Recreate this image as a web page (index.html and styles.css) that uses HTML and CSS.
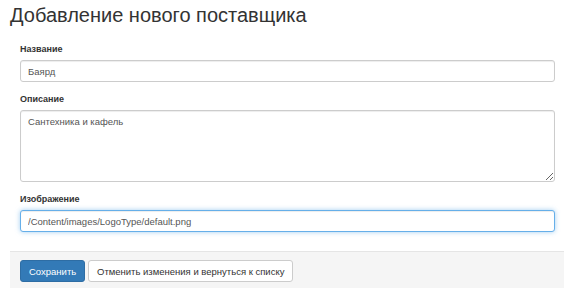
FILE: index.html
```html
<!DOCTYPE html>
<html lang="ru">
<head>
    <meta charset="UTF-8">
    <title>Добавление нового поставщика</title>
    <link rel="stylesheet" href="styles.css">
</head>
<body>

<div class="page">
    <h1>Добавление нового поставщика</h1>

    <form class="editor">
        <div class="fields">
            <div class="form-group">
                <label for="name">Название</label>
                <input class="form-control" id="name" type="text" value="Баярд">
            </div>
            <div class="form-group">
                <label for="desc">Описание</label>
                <textarea class="form-control area" id="desc">Сантехника и кафель</textarea>
            </div>
            <div class="form-group">
                <label for="image">Изображение</label>
                <input class="form-control focused" id="image" type="text" value="/Content/images/LogoType/default.png">
            </div>
        </div>

        <div class="footer">
            <button type="button" class="btn btn-primary">Сохранить</button>
            <button type="button" class="btn btn-default">Отменить изменения и вернуться к списку</button>
        </div>
    </form>
</div>

</body>
</html>
```

FILE: styles.css
```css
body {
    font-family: "Liberation Sans", Arial, sans-serif;
    font-size: 10px;
    color: #333;
    background-color: #fff;
    margin: 0;
    padding: 0;
}
.page {
    padding: 3px 0 0 10px;
}
h1 {
    font-size: 20px;
    font-weight: normal;
    line-height: 24px;
    margin: 0 0 17px 0;
}
.fields {
    padding: 0 9px 0 10px;
}
.form-group {
    margin-bottom: 12px;
}
.form-group:last-child {
    margin-bottom: 0;
}
label {
    display: block;
    font-size: 9px;
    font-weight: bold;
    line-height: 10px;
    margin-bottom: 6px;
}
.form-control {
    display: block;
    box-sizing: border-box;
    width: 100%;
    height: 22px;
    padding: 0 7px;
    font-family: inherit;
    font-size: 9.5px;
    color: #555;
    background-color: #fff;
    border: 1px solid #ccc;
    border-radius: 3px;
    box-shadow: inset 0 1px 1px rgba(0, 0, 0, 0.075);
    outline: none;
}
.area {
    height: 72px;
    padding: 4px 7px;
    line-height: 13px;
    resize: vertical;
}
.focused {
    border-color: #66afe9;
    box-shadow: inset 0 1px 1px rgba(0, 0, 0, 0.075), 0 0 5px rgba(102, 175, 233, 0.6);
}
.footer {
    margin-top: 19px;
    padding: 8px 10px 6px 10px;
    background-color: #f5f5f5;
    border-top: 1px solid #e5e5e5;
}
.btn {
    height: 22px;
    padding: 0 8px;
    font-family: inherit;
    font-size: 9.5px;
    border: 1px solid transparent;
    border-radius: 3px;
    cursor: pointer;
    vertical-align: middle;
}
.btn-primary {
    color: #fff;
    background-color: #337ab7;
    border-color: #2e6da4;
}
.btn-default {
    color: #333;
    background-color: #fff;
    border-color: #ccc;
}
```
